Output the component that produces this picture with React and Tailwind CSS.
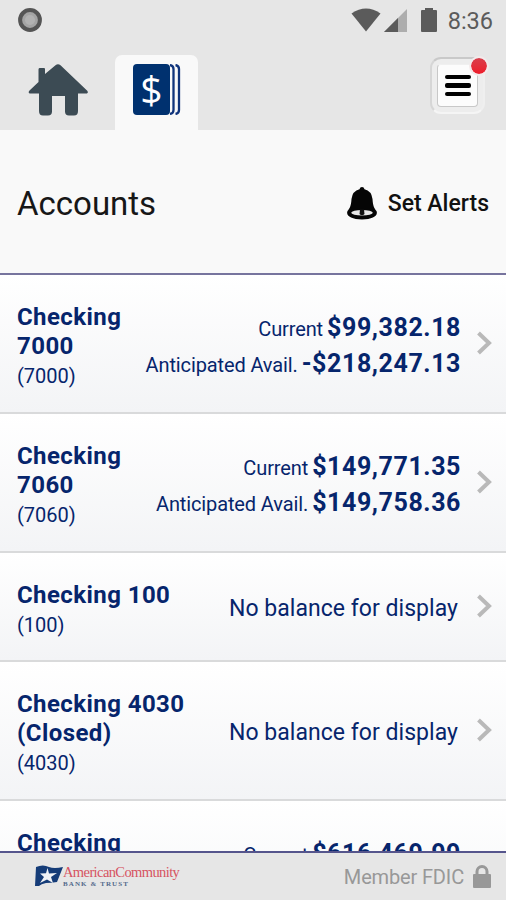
import React from "react";

const accounts = [
  { name: ["Checking", "7000"], number: "7000", current: "$99,382.18", available: "-$218,247.13", height: "h-[139px]" },
  { name: ["Checking", "7060"], number: "7060", current: "$149,771.35", available: "$149,758.36", height: "h-[139px]" },
  { name: ["Checking 100"], number: "100", height: "h-[109px]" },
  { name: ["Checking 4030", "(Closed)"], number: "4030", height: "h-[139px]" },
  { name: ["Checking"], current: "$616,469.99", height: "h-[139px]" },
];

function StatusBar() {
  return (
    <div className="flex h-[42px] items-start justify-between pl-[18px] pr-[13px] pt-2">
      <svg width="24" height="24" viewBox="0 0 24 24">
        <circle cx="12" cy="12" r="9.900" fill="#a4a4a4" stroke="#555" strokeWidth="4" />
        <circle cx="12" cy="12" r="5" fill="#b2b2b2" />
      </svg>
      <div className="flex">
        <svg width="92" height="26" viewBox="351 8 92 26">
          <path d="M351.500 13.500Q366 3.500 380.500 13.500L366 31.500Z" fill="#5b5b5b" />
          <path d="M407 9V32H384Z" fill="#adadad" />
          <path d="M398 18V32H384Z" fill="#5b5b5b" />
          <path d="M425 8h8v2h3q1 0 1 1v20q0 1-1 1h-14q-1 0-1-1v-20q0-1 1-1h3z" fill="#5b5b5b" />
        </svg>
        <span className="mt-[-1px] ml-[5px] text-[23.500px] leading-7 text-[#5b5b5b]">8:36</span>
      </div>
    </div>
  );
}

function NavBar() {
  return (
    <nav className="flex h-[88px] items-start">
      <svg className="mt-[20px] ml-[28px]" width="61" height="55" viewBox="28 62 61 55">
        <path
          d="M38.500 69.500q0-1.500 1-1.500h4.500q1 0 1 1v5L55.500 65.200q2.500-2 5 0L87.500 91q1 1.500-.5 2.500h-9V111q0 4.500-4 4.500h-5q-4 0-4-4V96H52v15.500q0 4-4 4h-5q-4 0-4-4.500V93.500h-9.500q-1.500-1-.5-2.500l9.500-9z"
          fill="#3c4b54"
        />
      </svg>
      <div className="mt-[13px] ml-[26px] h-[75px] w-[83px] rounded-t-[7px] bg-[#f9f9f9] pt-[9px] pl-[18px]">
        <div className="flex">
          <div className="flex h-[51px] w-[37px] items-center justify-center rounded-[4px] bg-[#00316f] font-['Open_Sans'] text-[39px] leading-none text-white">
            <span className="mt-[-2px]">$</span>
          </div>
          <svg width="11" height="51" viewBox="0 0 11 51">
            <path d="M0 1q3.500.5 3.500 4v41q0 3.500-3.500 4M5.500 1q3.500.5 3.500 4v41q0 3.500-3.500 4" fill="none" stroke="#10347c" strokeWidth="2.300" />
          </svg>
        </div>
      </div>
      <div className="relative mt-[15px] ml-[232px] h-[57px] w-[55px] rounded-[11px] border-2 border-t-[#c9c9c9] border-r-[#efefef] border-b-[#f5f5f5] border-l-[#d6d6d6] bg-[#ededed] p-[5px]">
        <div className="flex h-[43px] w-[41px] flex-col items-center justify-center gap-[4px] rounded-[4px] border border-[#c8c8c8] border-t-[#f0f0f0] bg-[#fcfcfc]">
          <i className="block h-[4.500px] w-[26px] rounded-[2px] bg-black" />
          <i className="block h-[4.500px] w-[26px] rounded-[2px] bg-black" />
          <i className="block h-[4.500px] w-[26px] rounded-[2px] bg-black" />
        </div>
        <span className="absolute top-[-3px] right-[-6px] size-[20px] rounded-full border-2 border-[#f3eaeb] bg-gradient-to-b from-[#d93c4a] to-[#ee1928] bg-clip-padding" />
      </div>
    </nav>
  );
}

function Bell() {
  return (
    <svg width="30" height="33" viewBox="0 0 30 33">
      <path
        d="M15 0q2 0 2.500 2.300Q24.500 4 25.500 12c.5 7 1.500 9 4 12 2 5-4 8.500-14.500 8.500S-1.500 29 .5 24c2.500-3 3.500-5 4-12Q5.500 4 12.500 2.300 13 0 15 0Z"
        fill="#050505"
      />
      <ellipse cx="15" cy="25.800" rx="10.800" ry="2.800" fill="#e8e8e8" />
      <path d="M13 22.500h4l.5 4.500q-2.500 2.500-5 0z" fill="#111" />
    </svg>
  );
}

function Balance({ label, value }) {
  return (
    <div className="flex h-9 items-baseline justify-end gap-[4px] leading-9">
      <span className="text-[20px] tracking-[-0.120px]">{label}</span>
      <span className="text-[25px] font-bold tracking-[0.580px]">{value}</span>
    </div>
  );
}

function AccountRow({ account }) {
  return (
    <div
      className={
        "flex shrink-0 border-b-2 border-[#d9dadb] bg-gradient-to-b from-white to-[#f3f4f6] pl-[17px] text-[#06256c] " + account.height
      }
    >
      <div className="pt-[28px]">
        {account.name.map((line) => (
          <div key={line} className="text-[24px] font-bold leading-[29px] tracking-[0.420px] whitespace-nowrap">
            {line}
          </div>
        ))}
        {account.number && <div className="text-[20px] leading-[31px]">({account.number})</div>}
      </div>
      <div className="flex flex-1 flex-col whitespace-nowrap">
        {account.current ? (
          <div className="pt-[35px] pr-[9px]">
            <Balance label="Current" value={account.current} />
            {account.available && <Balance label="Anticipated Avail." value={account.available} />}
          </div>
        ) : (
          <div className="my-auto pt-[4px] pr-[12px] text-right text-[23px] leading-7 tracking-[0.040px]">No balance for display</div>
        )}
      </div>
      <div className="flex w-[36px] items-center pb-[1px] pl-[6px]">
        <svg width="18" height="26" viewBox="0 0 18 26">
          <path d="M2.500 3 13 13 2.500 23" fill="none" stroke="#b9b9b9" strokeWidth="4" />
        </svg>
      </div>
    </div>
  );
}

function BankLogo() {
  return (
    <div className="flex">
      <svg width="28" height="22" viewBox="0 0 28 22">
        <path d="M1 2Q8-1 14 2q5 2 14 0l-6 15q-6 1-11 1-5 1-7 3H0Z" fill="#153c78" />
        <path d="m12.500 3 1.500 5.500 8-.5-6 4 2 6-6-3.500-7 3.500 4-6-4-3.500 6-.2z" fill="#f1f3f6" />
      </svg>
      <div className="whitespace-nowrap font-['Liberation_Serif',serif]">
        <div className="text-[14.500px] leading-[15px] tracking-[-0.600px] text-[#d65361]">AmericanCommunity</div>
        <div className="text-[7px] font-bold leading-[8px] tracking-[1.100px] text-[#52698b]">BANK &amp; TRUST</div>
      </div>
    </div>
  );
}

export default function App() {
  return (
    <div className="flex h-[900px] w-[506px] flex-col overflow-hidden bg-white font-['Roboto',sans-serif]">
      <header className="h-[130px] shrink-0 bg-[#e6e6e6]">
        <StatusBar />
        <NavBar />
      </header>
      <section className="flex h-[145px] shrink-0 items-center justify-between border-b-2 border-[#77749e] bg-[#f9f9f9] pt-[4px] pr-[17px] pl-[17px]">
        <h1 className="text-[33px] leading-10 text-[#171717]">Accounts</h1>
        <div className="flex items-center gap-[11px]">
          <Bell />
          <span className="text-[23px] font-medium leading-8 text-[#111]">Set Alerts</span>
        </div>
      </section>
      <main className="flex min-h-0 flex-1 flex-col overflow-hidden">
        {accounts.map((account, index) => (
          <AccountRow key={index} account={account} />
        ))}
      </main>
      <footer className="flex h-[49px] shrink-0 items-center justify-between border-t-2 border-[#55558c] bg-[#e6e6e6] pr-[15px] pl-[35px]">
        <BankLogo />
        <div className="flex items-center gap-[9px] text-[#989898]">
          <span className="text-[20px] leading-7 tracking-[-0.150px]">Member FDIC</span>
          <svg width="18" height="23" viewBox="0 0 18 23">
            <path d="M4 11V6.500a5 5 0 0 1 10 0V11" fill="none" stroke="currentColor" strokeWidth="3" />
            <rect y="9" width="18" height="14" rx="1" fill="currentColor" />
          </svg>
        </div>
      </footer>
    </div>
  );
}
